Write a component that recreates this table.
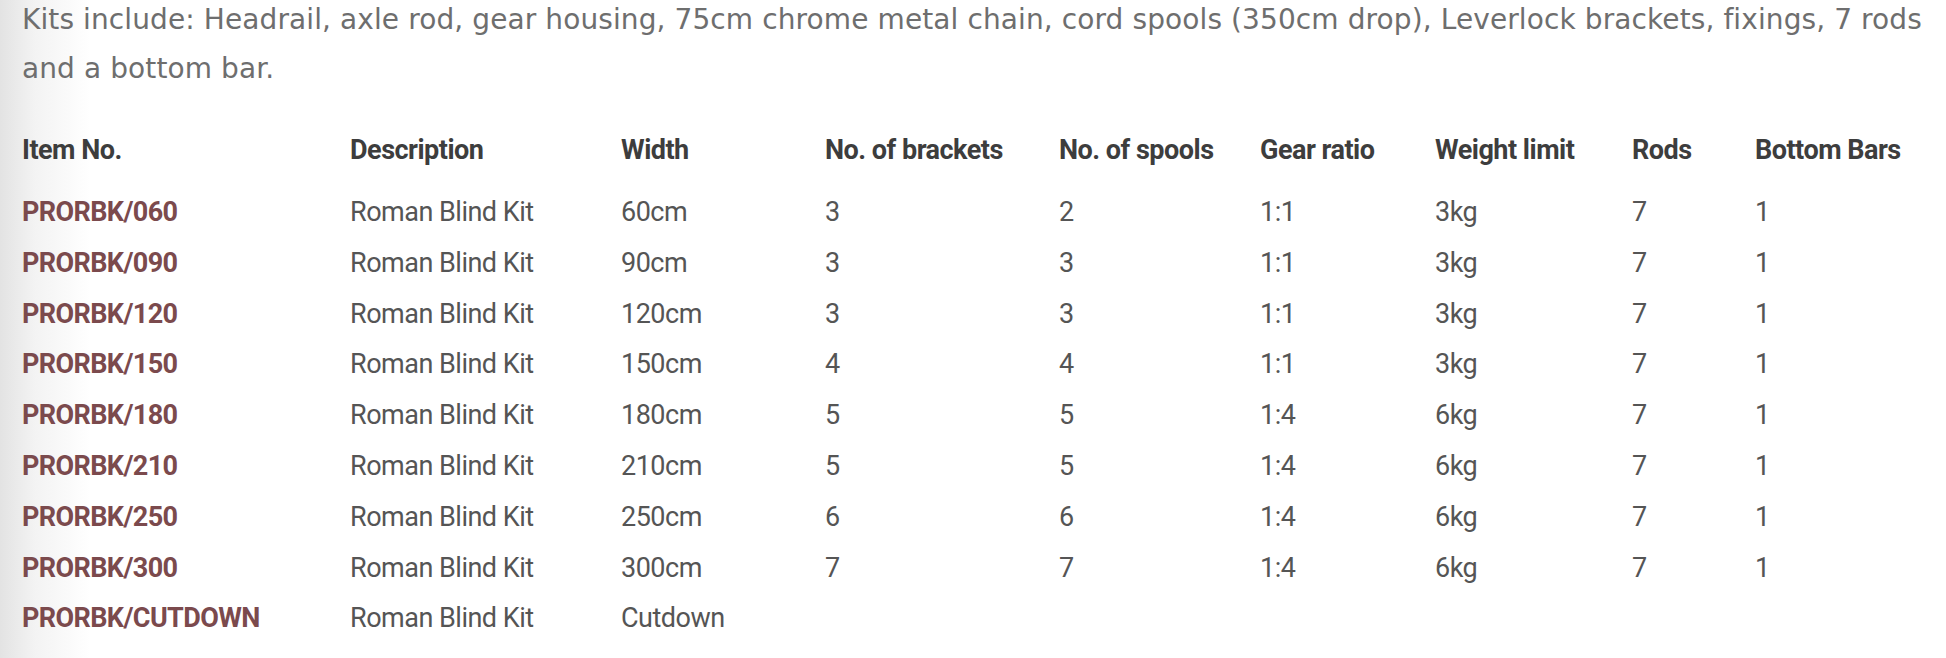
const rows = [
  { code: 'PRORBK/060', width: '60cm', brackets: '3', spools: '2', gear: '1:1', weight: '3kg', rods: '7', bars: '1' },
  { code: 'PRORBK/090', width: '90cm', brackets: '3', spools: '3', gear: '1:1', weight: '3kg', rods: '7', bars: '1' },
  { code: 'PRORBK/120', width: '120cm', brackets: '3', spools: '3', gear: '1:1', weight: '3kg', rods: '7', bars: '1' },
  { code: 'PRORBK/150', width: '150cm', brackets: '4', spools: '4', gear: '1:1', weight: '3kg', rods: '7', bars: '1' },
  { code: 'PRORBK/180', width: '180cm', brackets: '5', spools: '5', gear: '1:4', weight: '6kg', rods: '7', bars: '1' },
  { code: 'PRORBK/210', width: '210cm', brackets: '5', spools: '5', gear: '1:4', weight: '6kg', rods: '7', bars: '1' },
  { code: 'PRORBK/250', width: '250cm', brackets: '6', spools: '6', gear: '1:4', weight: '6kg', rods: '7', bars: '1' },
  { code: 'PRORBK/300', width: '300cm', brackets: '7', spools: '7', gear: '1:4', weight: '6kg', rods: '7', bars: '1' },
  { code: 'PRORBK/CUTDOWN', width: 'Cutdown', brackets: '', spools: '', gear: '', weight: '', rods: '', bars: '' },
];

const headers = [
  'Item No.',
  'Description',
  'Width',
  'No. of brackets',
  'No. of spools',
  'Gear ratio',
  'Weight limit',
  'Rods',
  'Bottom Bars',
];

const cols = 'grid grid-cols-[328px_271px_204px_234px_201px_175px_197px_123px_1fr]';

export default function App() {
  return (
    <div className="w-[1946px] h-[658px] overflow-hidden bg-[linear-gradient(to_right,#e3e3e3_0px,#f3f3f3_35px,#ffffff_90px)] pl-[22px] font-['Roboto',sans-serif]">
      <p className="-mt-[5px] text-[28px] leading-[49px] tracking-[0.1px] text-[#6e6e6e] font-['DejaVu_Sans',sans-serif] whitespace-nowrap">
        Kits include: Headrail, axle rod, gear housing, 75cm chrome metal chain, cord spools (350cm drop), Leverlock brackets, fixings, 7 rods
        <br />
        and a bottom bar.
      </p>

      <div className="mt-[32px]">
        <div className={`${cols} h-[62px] text-[27px] leading-[50.8px] font-bold tracking-[-0.5px] text-[#3d3d3d]`}>
          {headers.map((h) => (
            <span key={h}>{h}</span>
          ))}
        </div>

        {rows.map((r) => (
          <div key={r.code} className={`${cols} h-[50.8px] text-[27px] leading-[50.8px] text-[#555555] tracking-[-0.5px]`}>
            <span className="font-bold text-[#7b4a4d] tracking-[-0.6px]">{r.code}</span>
            <span>Roman Blind Kit</span>
            <span>{r.width}</span>
            <span>{r.brackets}</span>
            <span>{r.spools}</span>
            <span>{r.gear}</span>
            <span>{r.weight}</span>
            <span>{r.rods}</span>
            <span>{r.bars}</span>
          </div>
        ))}
      </div>
    </div>
  );
}
